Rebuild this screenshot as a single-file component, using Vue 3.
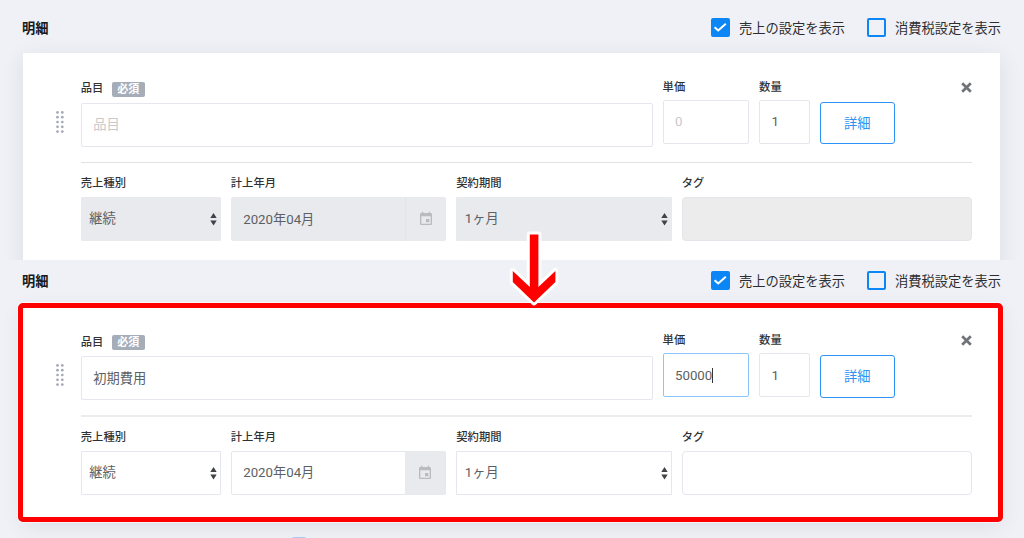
<script setup>
import { ref } from 'vue'

// ====== Ref declarations ======
const sections = ref([
  {
    id: 'before',
    item: '',
    price: '',
    quantity: '1',
    disabled: true,
    focused: false,
  },
  {
    id: 'after',
    item: '初期費用',
    price: '50000',
    quantity: '1',
    disabled: false,
    focused: true,
  },
])
</script>

<template>
  <div class="page">
    <section v-for="section in sections" :key="section.id" :class="['section', section.id]">
      <header class="section-header">
        <h2>明細</h2>
        <div class="options">
          <div class="option">
            <span class="checkbox checked">
              <svg viewBox="0 0 19 19">
                <path d="M3.6 9.3 7.2 12.5 14.8 5.8" fill="none" stroke="#fff" stroke-width="2" />
              </svg>
            </span>
            <span>売上の設定を表示</span>
          </div>
          <div class="option">
            <span class="checkbox"></span>
            <span>消費税設定を表示</span>
          </div>
        </div>
      </header>

      <div class="card">
        <svg class="grip" viewBox="0 0 8 22">
          <template v-for="n in 5" :key="n">
            <circle cx="1.5" :cy="n * 4.8 - 3.4" r="1.35" />
            <circle cx="6.3" :cy="n * 4.8 - 3.4" r="1.35" />
          </template>
        </svg>
        <div class="content">
          <div class="row-main">
            <div class="field item">
              <div class="label">品目<span class="badge">必須</span></div>
              <div class="input">
                <span v-if="section.item">{{ section.item }}</span>
                <span v-else class="placeholder">品目</span>
              </div>
            </div>
            <div class="field price">
              <div class="label">単価</div>
              <div class="input" :class="{ focused: section.focused }">
                <span v-if="section.price">{{ section.price }}</span>
                <span v-else class="placeholder">0</span>
                <span v-if="section.focused" class="caret"></span>
              </div>
            </div>
            <div class="field quantity">
              <div class="label">数量</div>
              <div class="input">{{ section.quantity }}</div>
            </div>
            <button class="detail">詳細</button>
            <svg class="close" viewBox="0 0 11 11">
              <path d="M1.2 1.2 9.8 9.8M9.8 1.2 1.2 9.8" stroke="#707377" stroke-width="2.7" />
            </svg>
          </div>

          <div class="row-sub" :class="{ disabled: section.disabled }">
            <div class="field">
              <div class="label">売上種別</div>
              <div class="input select">
                <span>継続</span>
                <svg class="arrows" viewBox="0 0 7 13">
                  <path d="M3.5 0 6.7 5H.3zM3.5 12.4 6.7 7.4H.3z" fill="#3f4347" />
                </svg>
              </div>
            </div>
            <div class="field">
              <div class="label">計上年月</div>
              <div class="input date">
                <span>2020年04月</span>
                <span class="addon">
                  <svg viewBox="0 0 24 24">
                    <path
                      d="M17 12h-5v5h5v-5zM16 1v2H8V1H6v2H5c-1.1 0-2 .9-2 2v14c0 1.1.9 2 2 2h14c1.1 0 2-.9 2-2V5c0-1.1-.9-2-2-2h-1V1h-2zm3 18H5V8h14v11z"
                      fill="#b9bbbe"
                    />
                  </svg>
                </span>
              </div>
            </div>
            <div class="field">
              <div class="label">契約期間</div>
              <div class="input select">
                <span>1ヶ月</span>
                <svg class="arrows" viewBox="0 0 7 13">
                  <path d="M3.5 0 6.7 5H.3zM3.5 12.4 6.7 7.4H.3z" fill="#3f4347" />
                </svg>
              </div>
            </div>
            <div class="field">
              <div class="label">タグ</div>
              <div class="input tag"></div>
            </div>
          </div>
        </div>
      </div>
    </section>

    <div class="next-button"></div>

    <svg class="down-arrow" viewBox="0 0 52 76">
      <path
        d="M21.8 4.4H30.4V57L47.4 41V52L26 72.4L4.8 52V41L21.8 57Z"
        fill="#fe0000"
        stroke="#fff"
        stroke-width="6"
        stroke-linejoin="round"
        paint-order="stroke"
      />
    </svg>
  </div>
</template>

<style>
body {
  margin: 0;
  background: #f0f1f6;
}
</style>

<style scoped>
.page {
  position: relative;
  width: 1024px;
  height: 538px;
  overflow: hidden;
  background: #f0f1f6;
  color: #5c5f63;
  font-family: Roboto, 'Noto Sans CJK JP', sans-serif;
  font-size: 13.25px;
}

.page * {
  box-sizing: border-box;
}

.section.before {
  height: 259.5px;
  overflow: hidden;
}

.section.after {
  margin-top: -6px;
}

.section-header {
  display: flex;
  justify-content: space-between;
  align-items: center;
  height: 52.9px;
  padding: 2px 23px 0 22px;
}

h2 {
  margin: 0;
  color: #17191c;
  font-size: 13.25px;
  font-weight: 700;
}

.options {
  display: flex;
  gap: 22.6px;
  color: #2b2d30;
}

.option {
  display: flex;
  align-items: center;
  gap: 8.5px;
  white-space: nowrap;
}

.checkbox {
  width: 19px;
  height: 19px;
  border: 2px solid #0d86f5;
  border-radius: 2px;
}

.checkbox svg {
  display: block;
  width: 19px;
  height: 19px;
  margin: -2px;
}

.checked {
  background: #0d86f5;
}

.card {
  position: relative;
  display: flex;
  width: 977px;
  height: 213.5px;
  margin-left: 23px;
  background: #fff;
  box-shadow: 0 5px 20px rgba(40, 45, 80, 0.1);
}

.before .card {
  height: 230px;
}

/* red frame around the edited row */
.after .card::after {
  content: '';
  position: absolute;
  inset: -3.4px -3px -2px -5px;
  border: 5px solid #fe0000;
  border-radius: 5px;
  box-shadow: 0 0 0 1px rgba(255, 255, 255, 0.6);
}

.grip {
  width: 8px;
  height: 22px;
  margin: 58px 16.8px 0 33px;
  fill: #a4a8b5;
}

.content {
  width: 891.5px;
}

.row-main {
  display: flex;
  height: 109.7px;
  border-bottom: 1px solid #e2e3e6;
}

.after .row-main {
  height: 110.2px;
  border-bottom: 2px solid #ebecee;
}

.label {
  display: flex;
  align-items: center;
  height: 20px;
  color: #2f3235;
  font-size: 11.3px;
  font-weight: 500;
  line-height: 20px;
}

.badge {
  width: 33px;
  height: 15px;
  margin-left: 8.4px;
  border-radius: 2px;
  background: #a5adb9;
  color: #fff;
  font-size: 11px;
  line-height: 15px;
  text-align: center;
  font-weight: 700;
}

.input {
  display: flex;
  align-items: center;
  height: 44px;
  padding: 0 11.4px;
  border: 1px solid #e5e6ee;
  border-radius: 2px;
  background: #fff;
}

.item {
  width: 571.8px;
  margin-right: 10px;
  padding-top: 26.2px;
}

.item .input {
  margin-top: 3.8px;
  padding-bottom: 2px;
}

.price {
  width: 86.5px;
  margin-right: 10px;
}

.quantity {
  width: 51px;
  margin-right: 10px;
}

.price,
.quantity {
  padding-top: 25px;
}

.price .input,
.quantity .input {
  margin-top: 2.1px;
}

.placeholder {
  color: #c8c9cb;
}

.focused {
  border-color: #8cc5fb;
}

.caret {
  width: 1px;
  height: 15px;
  background: #33363a;
}

.detail {
  width: 74.5px;
  height: 42.5px;
  margin-top: 48.7px;
  padding: 0 0 1px;
  border: 1px solid #2c93f5;
  border-radius: 3px;
  background: #fff;
  color: #2c93f5;
  font: inherit;
}

.close {
  width: 11px;
  height: 11px;
  margin: 28.8px 0.4px 0 auto;
}

.row-sub {
  display: grid;
  grid-template-columns: 140px 215.5px 215.5px 290.5px;
  gap: 10px;
  padding-top: 11.5px;
}

.after .row-sub {
  padding-top: 11px;
}

.row-sub .input {
  margin-top: 3px;
}

.select {
  justify-content: space-between;
  padding: 0 3px 3px 7.4px;
  border-radius: 1px;
}

.arrows {
  width: 7px;
  height: 13px;
  margin-top: 4px;
}

.row-sub .date {
  justify-content: space-between;
  padding-right: 0;
}

.date > span:first-child {
  margin-top: -1.5px;
}

.addon {
  display: flex;
  justify-content: center;
  align-items: center;
  width: 40px;
  height: 44px;
  background: #e8eaee;
}

.addon svg {
  width: 16px;
  height: 16px;
}

.row-sub .tag {
  border-radius: 4px;
}

.disabled .input {
  border-color: #e8eaee;
  background: #e8eaee;
}

.disabled .addon {
  border-left: 1px solid #e2e4e9;
}

.disabled .tag {
  border-color: #e4e5ea;
  background: #ececec;
}

/* top edge of the button cut off by the page bottom */
.next-button {
  width: 14px;
  height: 14px;
  margin: 17px 0 0 292px;
  border-radius: 2px;
  background: #a9cdf5;
}

.down-arrow {
  position: absolute;
  top: 230px;
  left: 508px;
  width: 52px;
  height: 76px;
}
</style>
